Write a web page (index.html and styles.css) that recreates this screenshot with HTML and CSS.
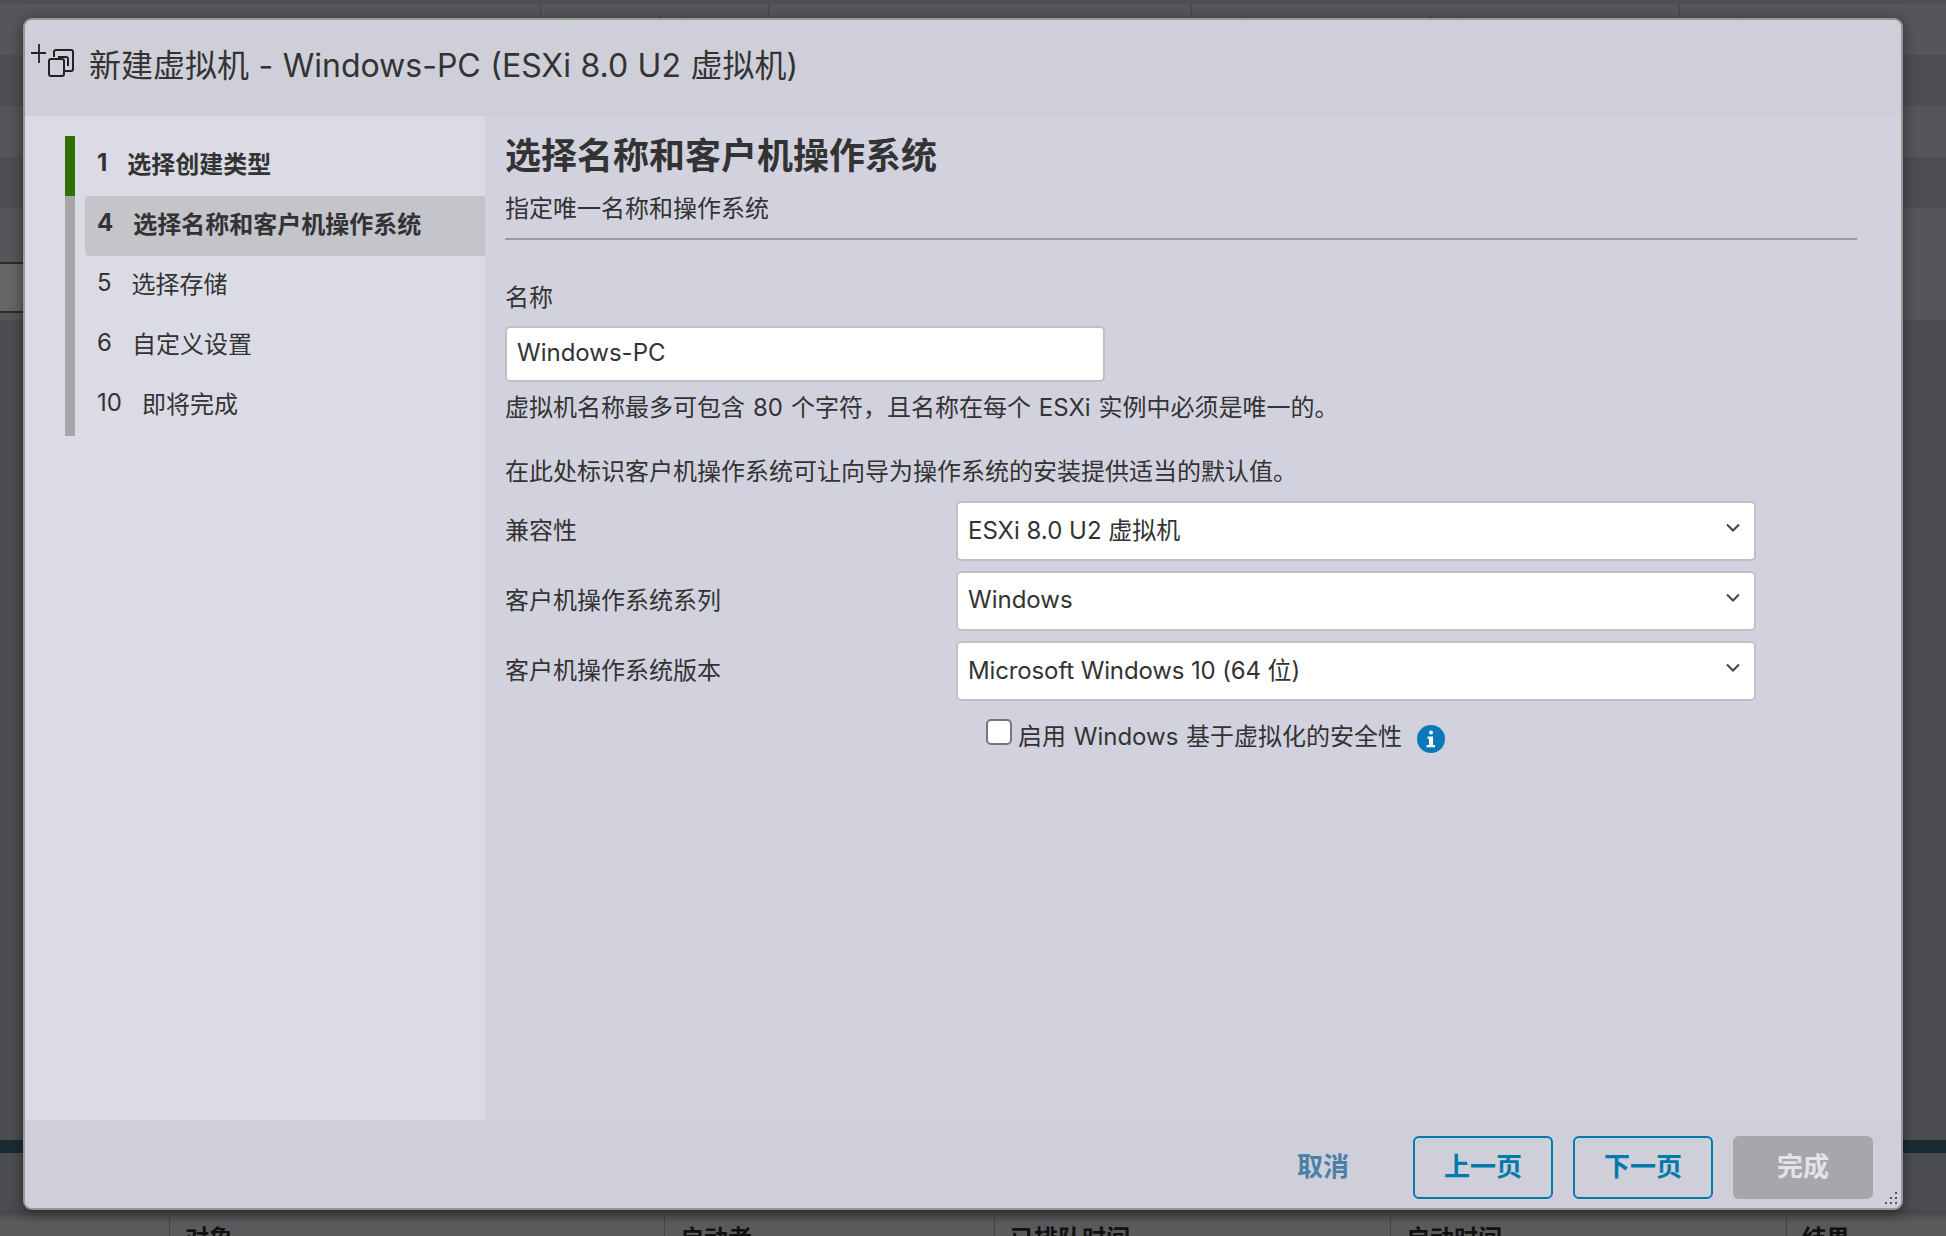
FILE: index.html
```html
<!DOCTYPE html>
<html lang="zh-CN">
<head>
<meta charset="utf-8">
<title>新建虚拟机</title>
<link rel="stylesheet" href="styles.css">
</head>
<body>
<div class="page">
  <div class="bg-top">
    <div class="bg-cell"></div>
    <div class="bg-cell cell-a"><span class="dot"></span><span>已完成</span></div>
    <div class="bg-cell"></div>
    <div class="bg-cell cell-b"><span>已完成</span><span>完成</span></div>
    <div class="bg-cell cell-c"><span>已完成</span></div>
  </div>
  <div class="bg-row dark"></div>
  <div class="bg-row light"></div>
  <div class="bg-row dark"></div>
  <div class="bg-row light mid">
    <div class="bg-tab"></div>
  </div>
  <div class="bg-fill"></div>
  <div class="bg-bar"></div>
  <div class="bg-gap"></div>
  <div class="bg-head">
    <div class="head-cell"></div>
    <div class="head-cell">对象</div>
    <div class="head-cell">启动者</div>
    <div class="head-cell">已排队时间</div>
    <div class="head-cell">启动时间</div>
    <div class="head-cell">结果</div>
  </div>
</div>

<section class="modal">
  <header class="modal-head">
    <svg class="modal-icon" width="44" height="34" viewBox="0 0 44 34" fill="none" stroke="#222" stroke-width="2">
      <path d="M8 0v19M0 9h15" stroke-width="1.800"/>
      <path d="M23 13V8a2 2 0 0 1 2-2h15a2 2 0 0 1 2 2v17a2 2 0 0 1-2 2H33"/>
      <path d="M27 13h8a2 2 0 0 1 2 2v7"/>
      <rect x="18" y="15" width="15" height="17" rx="2"/>
    </svg>
    <h1 class="modal-title">新建虚拟机 - Windows-PC (ESXi 8.0 U2 虚拟机)</h1>
  </header>
  <div class="modal-body">
    <nav class="side">
      <ol class="steps">
        <li class="step done"><div class="step-in"><span class="num">1</span><span>选择创建类型</span></div></li>
        <li class="step current"><div class="step-in"><span class="num">4</span><span>选择名称和客户机操作系统</span></div></li>
        <li class="step"><div class="step-in"><span class="num">5</span><span>选择存储</span></div></li>
        <li class="step"><div class="step-in"><span class="num">6</span><span>自定义设置</span></div></li>
        <li class="step"><div class="step-in"><span class="num">10</span><span>即将完成</span></div></li>
      </ol>
    </nav>
    <main class="content">
      <h2 class="page-title">选择名称和客户机操作系统</h2>
      <p class="subtitle">指定唯一名称和操作系统</p>
      <div class="name-label">名称</div>
      <div class="name-input">Windows-PC</div>
      <p class="help">虚拟机名称最多可包含 80 个字符，且名称在每个 ESXi 实例中必须是唯一的。</p>
      <p class="para">在此处标识客户机操作系统可让向导为操作系统的安装提供适当的默认值。</p>
      <div class="form">
        <div class="form-label">兼容性</div>
        <div class="select"><span class="select-text">ESXi 8.0 U2 虚拟机</span>
          <svg class="chev" width="16" height="10" viewBox="0 0 16 10" fill="none" stroke="#444" stroke-width="2"><path d="M2 1.500l6 6 6-6"/></svg></div>
        <div class="form-label">客户机操作系统系列</div>
        <div class="select"><span class="select-text latin">Windows</span>
          <svg class="chev" width="16" height="10" viewBox="0 0 16 10" fill="none" stroke="#444" stroke-width="2"><path d="M2 1.500l6 6 6-6"/></svg></div>
        <div class="form-label">客户机操作系统版本</div>
        <div class="select"><span class="select-text tight">Microsoft Windows 10 (64 位)</span>
          <svg class="chev" width="16" height="10" viewBox="0 0 16 10" fill="none" stroke="#444" stroke-width="2"><path d="M2 1.500l6 6 6-6"/></svg></div>
      </div>
      <div class="check-row">
        <span class="checkbox"></span>
        <span class="check-label">启用 Windows 基于虚拟化的安全性</span>
        <svg class="info" width="28" height="28" viewBox="0 0 28 28"><circle cx="14" cy="14" r="14" fill="#0a79b8"/><circle cx="14" cy="7.500" r="2" fill="#fff"/><path d="M10.500 11.500H16V20h2v2.200h-8.500V20h2.500v-6.300h-1.500z" fill="#fff"/></svg>
      </div>
    </main>
  </div>
  <footer class="modal-foot">
    <button class="btn link">取消</button>
    <button class="btn outline">上一页</button>
    <button class="btn outline">下一页</button>
    <button class="btn disabled">完成</button>
    <svg class="grip" width="14" height="14" viewBox="0 0 14 14" fill="#555"><rect x="11" y="1" width="2" height="2"/><rect x="6" y="6" width="2" height="2"/><rect x="11" y="6" width="2" height="2"/><rect x="1" y="11" width="2" height="2"/><rect x="6" y="11" width="2" height="2"/><rect x="11" y="11" width="2" height="2"/></svg>
  </footer>
</section>
</body>
</html>
```

FILE: styles.css
```css
* { box-sizing: border-box; }
html, body { margin: 0; padding: 0; }
body {
  width: 1946px;
  height: 1236px;
  overflow: hidden;
  position: relative;
  background: #4c4d51;
  font-family: Inter, "Noto Sans CJK SC", sans-serif;
  font-size: 24px;
  color: #333;
}
.page { height: 1236px; overflow: hidden; display: flex; flex-direction: column; }

.bg-top {
  height: 55px;
  flex: none;
  display: grid;
  grid-template-columns: 540px 228px 423px 488px 1fr;
  background: #555659;
  border-top: 4px solid #4e4f53;
  overflow: hidden;
}
.bg-cell { border-left: 1px solid #46474a; display: flex; gap: 138px; color: #151515; line-height: 24px; }
.bg-cell:first-child { border-left: none; }
.bg-cell span { margin-top: 14px; height: 24px; }
.cell-a { padding-left: 26px; gap: 45px; }
.bg-cell .dot { width: 12px; height: 12px; margin-top: 13px; border-radius: 50%; background: #3b6a12; }
.cell-b { padding-left: 18px; }
.cell-c { padding-left: 26px; }
.bg-row { flex: none; height: 51px; }
.bg-row.dark { background: #4d4e52; }
.bg-row.light { background: #555659; }
.bg-row.mid { height: 112px; padding-top: 54px; }
.bg-tab {
  width: 300px;
  height: 51px;
  background: #656566;
  border-top: 2px solid #2b2b2d;
  border-bottom: 2px solid #2b2b2d;
}
.bg-fill { flex: none; height: 820px; background: #4c4d51; }
.bg-bar { flex: none; height: 13px; background: #1b2a33; }
.bg-gap { flex: none; height: 57px; background: #4c4d51; }
.bg-head {
  flex: none;
  height: 26px;
  display: grid;
  grid-template-columns: 169px 495px 330px 396px 396px 1fr;
  background: linear-gradient(#454547, #5b5b5d 12px);
}
.head-cell {
  border-left: 1px solid #444;
  padding: 13px 0 0 15px;
  line-height: 32px;
  font-weight: 700;
  color: #111;
  overflow: hidden;
}
.head-cell:first-child { border-left: none; }

.modal {
  position: absolute;
  left: 23px;
  top: 18px;
  width: 1880px;
  height: 1192px;
  display: flex;
  flex-direction: column;
  background: #cfcfd9;
  border: 2px solid #96969b;
  border-radius: 9px;
  box-shadow: 0 3px 14px rgba(0, 0, 0, .45);
  overflow: hidden;
}
.modal-head {
  flex: none;
  height: 96px;
  display: flex;
  align-items: flex-start;
  background: #cfcfd9;
  padding: 24px 0 0 6px;
}
.modal-icon { flex: none; margin-right: 14px; }
.modal-title {
  margin: 0;
  font-size: 32px;
  font-weight: 400;
  line-height: 44px;
  word-spacing: .5px;
  color: #333;
}
.modal-body { flex: 1; min-height: 0; display: flex; }
.side { flex: none; width: 460px; background: #dbdbe5; padding: 20px 0 0 40px; }
.steps { list-style: none; margin: 0; padding: 0; }
.step { height: 60px; border-left: 10px solid #a6a6aa; }
.step.done { border-left-color: #317000; font-weight: 700; }
.step.current { font-weight: 700; }
.step-in {
  margin-left: 10px;
  height: 60px;
  padding: 0 0 7px 12px;
  display: flex;
  align-items: center;
}
.step.current .step-in { background: #c4c4cb; border-radius: 4px 0 0 4px; }
.num { margin-right: 20px; }
.content { flex: 1; background: #d2d2de; padding: 16px 0 0 20px; }
.page-title {
  margin: 0;
  font-size: 36px;
  font-weight: 700;
  line-height: 48px;
}
.subtitle {
  margin: 11px 44px 0 0;
  line-height: 36px;
  padding-bottom: 11px;
  border-bottom: 2px solid #9c9ca2;
}
.name-label { margin-top: 40px; line-height: 36px; }
.name-input {
  margin-top: 10px;
  width: 600px;
  height: 56px;
  padding: 0 10px;
  line-height: 50px;
  background: #fff;
  border: 2px solid #c0c0c4;
  border-radius: 5px;
}
.help { margin: 8px 0 0; line-height: 36px; word-spacing: 1.200px; }
.para { margin: 28px 0 0; line-height: 36px; }
.form {
  margin-top: 11px;
  display: grid;
  grid-template-columns: 451px 800px;
  grid-auto-rows: 60px;
  row-gap: 10px;
}
.form-label { line-height: 60px; }
.select {
  display: flex;
  align-items: center;
  justify-content: space-between;
  padding: 0 13px 0 10px;
  background: #fff;
  border: 2px solid #c0c0c4;
  border-radius: 5px;
}
.select-text { padding-bottom: 5px; }
.select-text.latin { padding-bottom: 3px; }
.tight { letter-spacing: -.13px; }
.chev { margin-top: -6px; }
.check-row { margin: 18px 0 0 481px; display: flex; align-items: flex-start; height: 36px; }
.checkbox {
  flex: none;
  width: 26px;
  height: 26px;
  background: #fff;
  border: 2px solid #77777b;
  border-radius: 5px;
}
.check-label { margin-left: 6px; line-height: 36px; word-spacing: 1px; }
.info { flex: none; margin: 6px 0 0 15px; }
.modal-foot {
  flex: none;
  height: 88px;
  display: flex;
  justify-content: flex-end;
  gap: 20px;
  padding: 16px 28px 0 0;
  background: #cfcfd9;
  position: relative;
}
.btn {
  width: 140px;
  height: 63px;
  padding: 0 0 7px;
  font: 700 26px Inter, "Noto Sans CJK SC", sans-serif;
  border-radius: 6px;
  background: transparent;
  border: 2px solid transparent;
}
.btn.link { color: #4a80a8; }
.btn.outline { color: #0079ad; border-color: #0079ad; }
.btn.disabled { color: #e4e4e8; background: #a6a6ab; }
.grip { position: absolute; right: 3px; bottom: 3px; }
```
